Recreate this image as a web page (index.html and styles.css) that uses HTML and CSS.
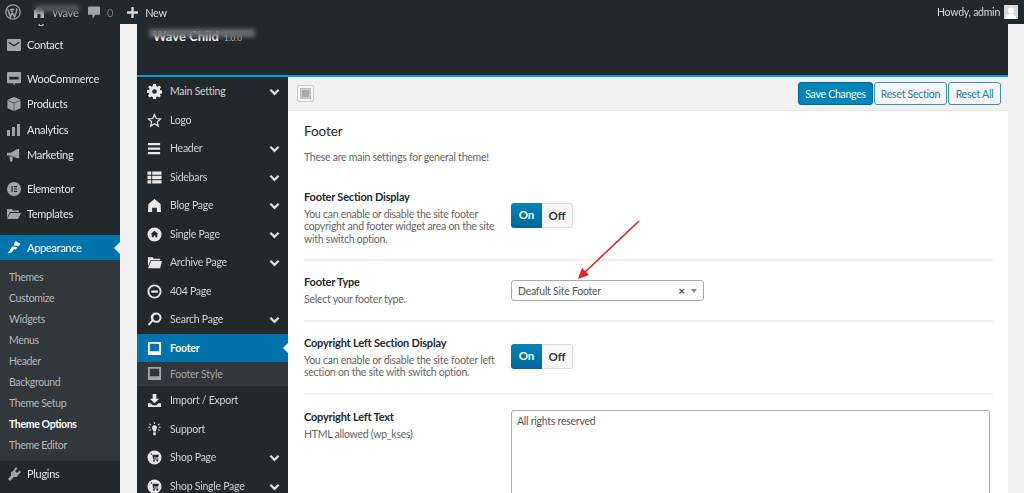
FILE: index.html
```html
<!DOCTYPE html>
<html lang="en">
<head>
    <meta charset="UTF-8">
    <meta name="viewport" content="width=device-width, initial-scale=1.0">
    <title>Theme Options</title>
    <link rel="stylesheet" href="styles.css">
</head>
<body>
    <svg class="defs" width="0" height="0">
        <symbol id="chev" viewBox="0 0 12 8"><path d="M1.5 1.5 6 6l4.500-4.500" fill="none" stroke="currentColor" stroke-width="2.4"/></symbol>
        <symbol id="screen" viewBox="0 0 16 16"><path fill-rule="evenodd" d="M1 1h14v14H1zM3 3v8h10V3z" fill="currentColor"/></symbol>
        <symbol id="cart-circle" viewBox="0 0 16 16"><path fill-rule="evenodd" d="M8 .5a7.500 7.500 0 1 1 0 15 7.500 7.500 0 0 1 0-15zM3.500 4l1 1h1.200l1 5h5.300v-1H7.600l-.2-1H12l.7-3H5.500l-.4-1.500z" fill="currentColor"/><circle cx="7.500" cy="11.500" r="1" fill="#23282d"/><circle cx="11" cy="11.500" r="1" fill="#23282d"/></symbol>
    </svg>

    <!-- Top admin bar -->
    <header class="admin-bar">
        <svg class="wp-logo" width="16" height="16" viewBox="0 0 16 16"><circle cx="8" cy="8" r="7.200" fill="none" stroke="currentColor" stroke-width="1.300"/><path d="M2.800 5.500 5.500 13 7.500 7.500M5 5.500h4.500M6 5.500 9.500 13l2.300-6.500c.3-1-.1-1.500-.6-2" fill="none" stroke="currentColor" stroke-width="1.500"/></svg>
        <div class="site-name">
            <svg width="12" height="12" viewBox="0 0 12 12"><path d="M1 12V4.500L6 1l5 3.500V12H7.500V8h-3v4z" fill="currentColor"/></svg>
            <span>Wave</span>
            <i class="smudge"></i>
        </div>
        <div class="bar-item comments">
            <svg width="12" height="13" viewBox="0 0 13 13"><path d="M1 0h11a1 1 0 0 1 1 1v7a1 1 0 0 1-1 1H8l-3 4V9H1a1 1 0 0 1-1-1V1a1 1 0 0 1 1-1z" fill="currentColor"/></svg>
            <span class="count">0</span>
        </div>
        <div class="bar-item new">
            <svg width="11" height="11" viewBox="0 0 12 12"><path d="M4.700 0h2.600v4.700H12v2.600H7.300V12H4.700V7.300H0V4.700h4.700z" fill="currentColor"/></svg>
            <span>New</span>
        </div>
        <div class="howdy">
            <span>Howdy, admin</span>
            <div class="avatar"><svg width="14" height="14" viewBox="0 0 14 14"><rect width="14" height="14" fill="#d9d9d9"/><circle cx="7" cy="5.500" r="3" fill="#fff"/><path d="M1.500 14c.5-3.500 2.500-5 5.500-5s5 1.500 5.500 5z" fill="#fff"/></svg></div>
        </div>
    </header>

    <div class="layout">
        <!-- WordPress side menu -->
        <nav class="sidebar">
            <div class="menu-item peek">Pages</div>
            <div class="menu-item">
                <svg viewBox="0 0 14 12"><path fill-rule="evenodd" d="M1 0h12a1 1 0 0 1 1 1v10a1 1 0 0 1-1 1H1a1 1 0 0 1-1-1V1a1 1 0 0 1 1-1zm.500 2.500v1.500L7 7.500 12.500 4V2.500L7 6z" fill="currentColor"/></svg>
                Contact
            </div>
            <div class="menu-item spaced">
                <svg viewBox="0 0 15 15"><path fill-rule="evenodd" d="M1 0h13a1 1 0 0 1 1 1v10a1 1 0 0 1-1 1H9l-2 2.500V12H1a1 1 0 0 1-1-1V1a1 1 0 0 1 1-1zm1.500 5v3h10V5z" fill="currentColor"/></svg>
                WooCommerce
            </div>
            <div class="menu-item">
                <svg viewBox="0 0 14 15"><path d="M7 0l7 3v9l-7 3-7-3V3z" fill="currentColor"/><path d="M0 3.500l7 3 7-3M7 6.500V15" stroke="#23282d" stroke-width=".6" fill="none"/></svg>
                Products
            </div>
            <div class="menu-item">
                <svg viewBox="0 0 14 14"><path d="M0 7h3v6H0zM5 4h3v9H5zM10 1h3v12h-3z" fill="currentColor"/></svg>
                Analytics
            </div>
            <div class="menu-item">
                <svg viewBox="0 0 15 15"><path d="M0 5h4l7-4h2v10h-2L4 8H0zM2.500 9H6v5.500H3.500z" fill="currentColor"/></svg>
                Marketing
            </div>
            <div class="menu-item spaced">
                <svg viewBox="0 0 14 14"><path fill-rule="evenodd" d="M7 0a7 7 0 1 1 0 14A7 7 0 0 1 7 0zM4.500 4v6h1.200V4zm2.500 0v1.200h3V4zm0 2.400v1.200h3V6.400zm0 2.400V10h3V8.800z" fill="currentColor"/></svg>
                Elementor
            </div>
            <div class="menu-item">
                <svg viewBox="0 0 14 12"><path d="M0 1h5l1 1.500h6V4H3L0 10zM3.500 5H14l-3 6H0z" fill="currentColor"/></svg>
                Templates
            </div>
            <div class="menu-item active spaced">
                <svg viewBox="0 0 15 15"><path d="M9 0l5.500 3-2.500 3-5-1.500zM6 5.500l5 1.500-1.500 2-2-.5c-1 2.500-3.500 5-7 4.500C2 12 3 9.500 4.500 7.500z" fill="currentColor"/></svg>
                Appearance
            </div>
            <ul class="submenu">
                <li>Themes</li>
                <li>Customize</li>
                <li>Widgets</li>
                <li>Menus</li>
                <li>Header</li>
                <li>Background</li>
                <li>Theme Setup</li>
                <li class="current">Theme Options</li>
                <li>Theme Editor</li>
            </ul>
            <div class="menu-item">
                <svg viewBox="0 0 14 14"><path d="M9 0l1.500 1.500L8 4l2 2 2.500-2.500L14 5l-3 3-1 2-3 0-4 4-2-2 3-3.500 0-3 2-1.500z" fill="currentColor"/></svg>
                Plugins
            </div>
        </nav>

        <main class="options">
            <div class="options-head">
                <h2>Wave Child <small>1.0.0</small></h2>
                <i class="smudge wide"></i>
            </div>

            <div class="options-body">
                <!-- Option panel tabs -->
                <ul class="tabs">
                    <li><svg viewBox="0 0 16 16"><path fill-rule="evenodd" d="M6.500 0h3l.4 2.200 1.300.6L13 1.500 15 3.500l-1.300 1.800.6 1.300 2.200.4v3l-2.200.4-.6 1.300L15 12.500 13 14.500l-1.800-1.300-1.300.6L9.500 16h-3l-.4-2.200-1.300-.6L3 14.500 1 12.500l1.300-1.800-.6-1.300L0 9.500v-3l2.200-.4.6-1.300L1 3.500 3 1.500l1.800 1.300 1.300-.6zM8 5.500a2.500 2.500 0 1 0 0 5 2.500 2.500 0 0 0 0-5z" fill="currentColor"/></svg>Main Setting<svg class="chev"><use href="#chev"/></svg></li>
                    <li><svg viewBox="0 0 16 16"><path d="M8 1.500l1.900 4.400 4.700.4-3.600 3.100 1.100 4.600L8 11.500l-4.100 2.500L5 9.400 1.400 6.300l4.700-.4z" fill="none" stroke="currentColor" stroke-width="1.300"/></svg>Logo</li>
                    <li><svg viewBox="0 0 16 16"><path d="M1 2h13v2.400H1zM1 6.800h13v2.400H1zM1 11.600h13V14H1z" fill="currentColor"/></svg>Header<svg class="chev"><use href="#chev"/></svg></li>
                    <li><svg viewBox="0 0 16 16"><path d="M.5 1.500h4v3.600h-4zM5.500 1.500h10v3.600h-10zM.5 6.200h4v3.600h-4zM5.500 6.200h10v3.600h-10zM.5 10.900h4v3.600h-4zM5.500 10.900h10v3.600h-10z" fill="currentColor"/></svg>Sidebars<svg class="chev"><use href="#chev"/></svg></li>
                    <li><svg viewBox="0 0 16 16"><path d="M8 1l6.500 5.500L15 15h-4.500v-4.500h-5V15H1l.5-8.500z" fill="currentColor"/></svg>Blog Page<svg class="chev"><use href="#chev"/></svg></li>
                    <li><svg viewBox="0 0 16 16"><path fill-rule="evenodd" d="M8 .5a7.500 7.500 0 1 1 0 15 7.500 7.500 0 0 1 0-15zM8 4L4 7.500h1V11h2.200V9h1.600v2H11V7.500h1z" fill="currentColor"/></svg>Single Page<svg class="chev"><use href="#chev"/></svg></li>
                    <li><svg viewBox="0 0 16 16"><path d="M1 2.500h5l1 1.500h7v1.500H4L1 12zM4.500 6.500H16L14 14H1z" fill="currentColor"/></svg>Archive Page<svg class="chev"><use href="#chev"/></svg></li>
                    <li><svg viewBox="0 0 16 16"><path fill-rule="evenodd" d="M8 .5a7.500 7.500 0 1 1 0 15 7.500 7.500 0 0 1 0-15zm0 2a5.500 5.500 0 1 0 0 11 5.500 5.500 0 0 0 0-11zM4.500 6.800h7v2.400h-7z" fill="currentColor"/></svg>404 Page</li>
                    <li><svg viewBox="0 0 16 16"><path fill-rule="evenodd" d="M10 .5a5.500 5.500 0 1 1-3.700 9.600L2.500 14.500.8 13l4-4.200A5.500 5.500 0 0 1 10 .5zm0 2.200a3.300 3.300 0 1 0 0 6.600 3.300 3.300 0 0 0 0-6.600z" fill="currentColor"/></svg>Search Page<svg class="chev"><use href="#chev"/></svg></li>
                    <li class="active"><svg><use href="#screen"/></svg>Footer</li>
                    <li class="sub"><svg><use href="#screen"/></svg>Footer Style</li>
                    <li><svg viewBox="0 0 16 16"><path d="M6 1h4v5h3L8 11 3 6h3zM1 11h3l2 2h4l2-2h3v4H1z" fill="currentColor"/></svg>Import / Export</li>
                    <li><svg viewBox="0 0 16 16"><path d="M5.500 5a2.800 2.800 0 0 1 5 0c.5 2-1 3-1.200 5H6.700C6.500 8 5 7 5.500 5zM6.700 11h2.600v3H6.700zM7.500 0h1v2h-1zM1.500 5h2v1h-2zM12.500 5h2v1h-2zM2.800 1.500l1.700 1.500-.7.700L2.100 2.200zM13.200 1.500l.7.700-1.700 1.500-.7-.7zM3.800 7.500l.7.700-1.700 1.500-.7-.7zM12.200 7.500l1.700 1.500-.7.700-1.700-1.500z" fill="currentColor"/></svg>Support</li>
                    <li><svg><use href="#cart-circle"/></svg>Shop Page<svg class="chev"><use href="#chev"/></svg></li>
                    <li><svg><use href="#cart-circle"/></svg>Shop Single Page<svg class="chev"><use href="#chev"/></svg></li>
                </ul>

                <div class="panel">
                    <div class="actions">
                        <button class="expand" aria-label="Expand"><i></i></button>
                        <div class="action-buttons">
                            <button class="btn primary">Save Changes</button>
                            <button class="btn">Reset Section</button>
                            <button class="btn">Reset All</button>
                        </div>
                    </div>

                    <div class="section">
                        <h3>Footer</h3>
                        <p class="section-desc">These are main settings for general theme!</p>

                        <div class="field first">
                            <div class="field-label">
                                <h4>Footer Section Display</h4>
                                <p>You can enable or disable the site footer copyright and footer widget area on the site with switch option.</p>
                            </div>
                            <div class="switch"><span class="on">On</span><span class="off">Off</span></div>
                        </div>

                        <div class="field type">
                            <div class="field-label">
                                <h4>Footer Type</h4>
                                <p>Select your footer type.</p>
                            </div>
                            <div class="select">
                                <span>Deafult Site Footer</span>
                                <b class="clear">×</b>
                                <i class="caret"></i>
                            </div>
                        </div>

                        <div class="field copy">
                            <div class="field-label">
                                <h4>Copyright Left Section Display</h4>
                                <p>You can enable or disable the site footer left section on the site with switch option.</p>
                            </div>
                            <div class="switch"><span class="on">On</span><span class="off">Off</span></div>
                        </div>

                        <div class="field text">
                            <div class="field-label">
                                <h4>Copyright Left Text</h4>
                                <p>HTML allowed (wp_kses)</p>
                            </div>
                            <div class="textarea">All rights reserved</div>
                        </div>
                    </div>
                </div>
            </div>
        </main>
    </div>

    <!-- Annotation arrow drawn over the screenshot -->
    <svg class="arrow" width="70" height="66" viewBox="0 0 70 66">
        <path d="M64 2 9 54" stroke="#ee1c25" stroke-width="1.600" fill="none"/>
        <path d="M3 60 7 49 14 56z" fill="#ee1c25"/>
    </svg>
</body>
</html>
```

FILE: styles.css
```css
* {
    box-sizing: border-box;
}
html, body {
    margin: 0;
    height: 493px;
    overflow: hidden;
}
body {
    font-family: Lato, "Open Sans", sans-serif;
    font-size: 10.500px;
    letter-spacing: -0.25px;
    background-color: #f1f1f1;
    color: #444;
    position: relative;
    filter: blur(0.3px);
}
.defs {
    position: absolute;
}

/* Admin bar */
.admin-bar {
    position: relative;
    z-index: 2;
    display: flex;
    align-items: center;
    height: 24px;
    background-color: #23282d;
    color: #a0a5aa;
    font-size: 11px;
}
.wp-logo {
    margin-left: 5px;
}
.site-name {
    position: relative;
    display: flex;
    align-items: center;
    gap: 7px;
    margin-left: 12px;
    width: 50px;
    color: #b4b9be;
}
.smudge {
    position: absolute;
    left: 2px;
    top: -1px;
    width: 44px;
    height: 7px;
    background-color: #50555a;
    filter: blur(2px);
}
.bar-item {
    display: flex;
    align-items: center;
}
.comments {
    gap: 7px;
    margin-left: 5px;
}
.count {
    color: #72777c;
}
.new {
    gap: 7px;
    margin-left: 14px;
    color: #d5d7d9;
}
.howdy {
    display: flex;
    align-items: center;
    gap: 4px;
    margin-left: auto;
    margin-right: 6px;
    color: #d5d7d9;
    font-size: 10.500px;
}
.avatar {
    display: flex;
}

.layout {
    display: flex;
    align-items: flex-start;
}

/* Side menu */
.sidebar {
    width: 120px;
    height: 469px;
    flex-shrink: 0;
    background-color: #23282d;
    color: #e4e5e6;
    overflow: hidden;
    font-size: 11px;
    letter-spacing: -0.3px;
}
.menu-item {
    position: relative;
    display: flex;
    align-items: center;
    height: 25.500px;
    padding-left: 27px;
}
.menu-item svg {
    position: absolute;
    left: 7px;
    top: 6px;
    width: 14px;
    height: 14px;
    color: #a0a5aa;
}
.menu-item.peek {
    margin-top: -17.500px;
}
.menu-item.spaced {
    margin-top: 8px;
}
.menu-item.active {
    background-color: #0073aa;
    color: #fff;
}
.menu-item.active svg {
    color: #fff;
}
.menu-item.active::after {
    content: "";
    position: absolute;
    right: 0;
    top: 7px;
    border: 6px solid transparent;
    border-right-color: #f1f1f1;
}
.submenu {
    list-style: none;
    margin: 0;
    padding: 7px 0 5px 9px;
    background-color: #32373c;
    color: #b4b9be;
    font-size: 10.500px;
    letter-spacing: -0.35px;
}
.submenu li {
    height: 21px;
    line-height: 21px;
}
.submenu .current {
    color: #fff;
    font-weight: 700;
}

/* Options frame */
.options {
    width: 871px;
    margin-left: 17px;
}
.options-head {
    position: relative;
    height: 53px;
    padding: 3px 0 0 16px;
    background-color: #23282d;
    border-bottom: 2px solid #00a0d2;
    overflow: hidden;
}
.options-head h2 {
    margin: 0;
    color: #fff;
    font-size: 13px;
    line-height: 18px;
    letter-spacing: 0;
}
.options-head small {
    margin-left: 2px;
    font-size: 8px;
    font-weight: 400;
    color: #c0c0c0;
}
.smudge.wide {
    left: 12px;
    top: 5px;
    width: 106px;
    height: 8px;
    background-color: #6a6e72;
}
.options-body {
    display: flex;
    height: 416px;
    overflow: hidden;
}

/* Option tabs */
.tabs {
    list-style: none;
    width: 151px;
    flex-shrink: 0;
    margin: 0;
    padding: 0;
    background-color: #23282d;
    color: #d0d2d3;
}
.tabs li {
    position: relative;
    display: flex;
    align-items: center;
    height: 28.500px;
    padding-left: 33px;
}
.tabs li > svg:first-child {
    position: absolute;
    left: 10px;
    top: 7px;
    width: 15px;
    height: 15px;
    color: #e8e8e8;
}
.tabs .chev {
    position: absolute;
    right: 8px;
    top: 11px;
    width: 11px;
    height: 8px;
    color: #e0e0e0;
}
.tabs .active {
    background-color: #0073aa;
    color: #fff;
    font-weight: 700;
}
.tabs li.active > svg:first-child {
    color: #fff;
}
.tabs .active::after {
    content: "";
    position: absolute;
    right: 0;
    top: 9px;
    border: 5px solid transparent;
    border-right-color: #fff;
}
.tabs .sub {
    height: 24px;
    background-color: #32373c;
    color: #a0a5aa;
}
.tabs li.sub > svg:first-child {
    top: 4px;
    color: #a0a5aa;
}

/* Panel */
.panel {
    flex: 1;
    background-color: #fff;
}
.actions {
    display: flex;
    align-items: center;
    justify-content: space-between;
    height: 34px;
    padding: 0 7px 0 9px;
    background-color: #f1f1f1;
    border-bottom: 1px solid #e5e5e5;
}
.expand {
    width: 17px;
    height: 17px;
    padding: 2px;
    background-color: #f7f7f7;
    border: 1px solid #ccc;
    border-radius: 2px;
}
.expand i {
    display: block;
    width: 11px;
    height: 11px;
    background-color: #aaa;
    border: 2px solid #ccc;
    outline: 1px solid #bbb;
    outline-offset: -1px;
}
.action-buttons {
    display: flex;
    gap: 1px;
}
.btn {
    height: 23px;
    padding: 0;
    font-family: inherit;
    font-size: 10.500px;
    letter-spacing: -0.25px;
    width: 73px;
    color: #2b7ba8;
    background-color: #f3f5f6;
    border: 1px solid #3a8fb8;
    border-radius: 3px;
}
.btn.primary {
    width: 75px;
    background-color: #0085ba;
    border-color: #006799;
    color: #fff;
}
.btn:last-child {
    width: 53px;
}

.section {
    padding: 10px 15px 0 16px;
}
.section h3 {
    margin: 0;
    font-size: 13.500px;
    font-weight: 400;
    line-height: 20px;
    letter-spacing: -0.1px;
    color: #23282d;
}
.section-desc {
    margin: 9px 0 0;
    line-height: 14px;
    color: #666;
}
.field {
    display: flex;
    border-bottom: 2px solid #f1f1f1;
}
.field-label {
    width: 207px;
    flex-shrink: 0;
    padding-right: 14px;
}
.field h4 {
    margin: 0;
    font-size: 11px;
    font-weight: 700;
    line-height: 16px;
    letter-spacing: -0.2px;
    color: #23282d;
}
.field p {
    margin: 3px 0 0;
    line-height: 12.300px;
    color: #666;
}
.field.first {
    margin-top: 25px;
    height: 72px;
}
.field.type {
    height: 61px;
    padding-top: 13px;
}
.field.copy {
    height: 73px;
    padding-top: 13px;
}
.field.text {
    padding-top: 14px;
    border-bottom: none;
}
.switch {
    display: flex;
    align-self: flex-start;
    width: 62px;
    height: 25px;
    margin-top: 14px;
    border-radius: 3px;
    font-size: 11.500px;
    font-weight: 700;
    line-height: 24px;
    letter-spacing: 0;
    text-align: center;
}
.field.copy .switch {
    margin-top: 9px;
}
.switch span {
    width: 31px;
}
.switch .on {
    color: #fff;
    background: linear-gradient(#0085ba, #006799);
    border-radius: 3px 0 0 3px;
}
.switch .off {
    color: #333;
    background-color: #f7f7f7;
    border: 1px solid #ddd;
    border-left: none;
    border-radius: 0 3px 3px 0;
}
.select {
    display: flex;
    align-items: center;
    width: 193px;
    height: 21px;
    margin-top: 6px;
    padding: 0 6px;
    border: 1px solid #aaa;
    border-radius: 3px;
    color: #555;
}
.select span {
    flex: 1;
}
.clear {
    font-size: 12px;
    color: #444;
}
.caret {
    margin-left: 6px;
    border: 3.500px solid transparent;
    border-top: 4px solid #888;
    border-bottom: none;
}
.textarea {
    width: 479px;
    height: 120px;
    margin-top: 1px;
    padding: 2px 5px;
    border: 1px solid #a8b0b8;
    border-radius: 3px;
    line-height: 16px;
    color: #555;
}

/* Annotation */
.arrow {
    position: absolute;
    left: 575px;
    top: 219px;
    z-index: 3;
}
```
